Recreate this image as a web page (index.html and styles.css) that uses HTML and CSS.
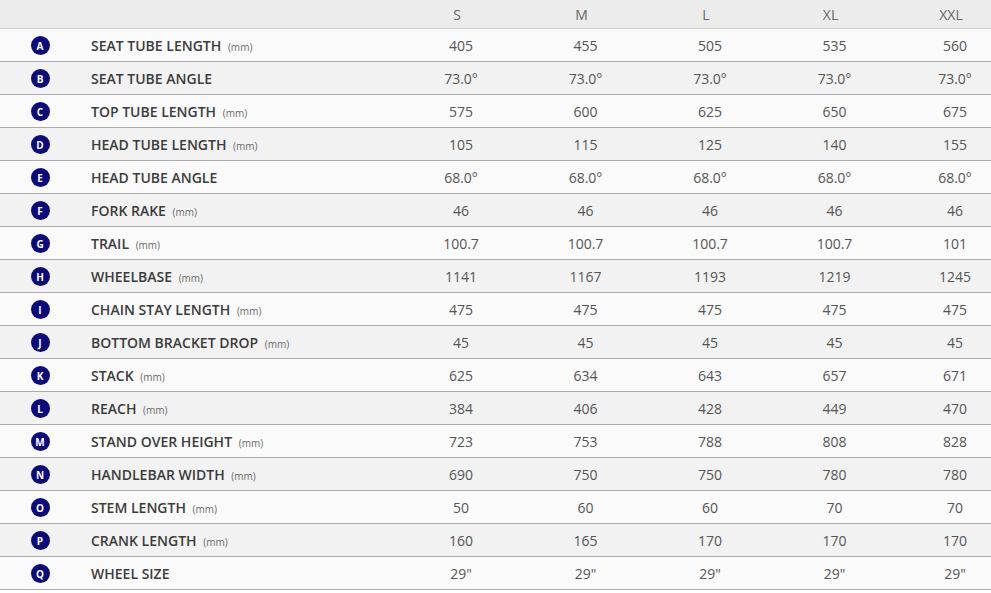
FILE: index.html
```html
<!DOCTYPE html>
<html lang="en">
<head>
<meta charset="utf-8">
<title>Geometry</title>
<link rel="stylesheet" href="styles.css">
</head>
<body>
<div class="geo">
  <div class="row head">
    <div class="key"></div><div class="label"></div>
    <div class="val">S</div><div class="val">M</div><div class="val">L</div><div class="val">XL</div><div class="val last">XXL</div>
  </div>
  <div class="row odd"><div class="key"><span class="dot">A</span></div><div class="label">SEAT TUBE LENGTH <small>(mm)</small></div><div class="val">405</div><div class="val">455</div><div class="val">505</div><div class="val">535</div><div class="val last">560</div></div>
  <div class="row even"><div class="key"><span class="dot">B</span></div><div class="label">SEAT TUBE ANGLE</div><div class="val">73.0°</div><div class="val">73.0°</div><div class="val">73.0°</div><div class="val">73.0°</div><div class="val last">73.0°</div></div>
  <div class="row odd"><div class="key"><span class="dot">C</span></div><div class="label">TOP TUBE LENGTH <small>(mm)</small></div><div class="val">575</div><div class="val">600</div><div class="val">625</div><div class="val">650</div><div class="val last">675</div></div>
  <div class="row even"><div class="key"><span class="dot">D</span></div><div class="label">HEAD TUBE LENGTH <small>(mm)</small></div><div class="val">105</div><div class="val">115</div><div class="val">125</div><div class="val">140</div><div class="val last">155</div></div>
  <div class="row odd"><div class="key"><span class="dot">E</span></div><div class="label">HEAD TUBE ANGLE</div><div class="val">68.0°</div><div class="val">68.0°</div><div class="val">68.0°</div><div class="val">68.0°</div><div class="val last">68.0°</div></div>
  <div class="row even"><div class="key"><span class="dot">F</span></div><div class="label">FORK RAKE <small>(mm)</small></div><div class="val">46</div><div class="val">46</div><div class="val">46</div><div class="val">46</div><div class="val last">46</div></div>
  <div class="row odd"><div class="key"><span class="dot">G</span></div><div class="label">TRAIL <small>(mm)</small></div><div class="val">100.7</div><div class="val">100.7</div><div class="val">100.7</div><div class="val">100.7</div><div class="val last">101</div></div>
  <div class="row even"><div class="key"><span class="dot">H</span></div><div class="label">WHEELBASE <small>(mm)</small></div><div class="val">1141</div><div class="val">1167</div><div class="val">1193</div><div class="val">1219</div><div class="val last">1245</div></div>
  <div class="row odd"><div class="key"><span class="dot">I</span></div><div class="label">CHAIN STAY LENGTH <small>(mm)</small></div><div class="val">475</div><div class="val">475</div><div class="val">475</div><div class="val">475</div><div class="val last">475</div></div>
  <div class="row even"><div class="key"><span class="dot">J</span></div><div class="label">BOTTOM BRACKET DROP <small>(mm)</small></div><div class="val">45</div><div class="val">45</div><div class="val">45</div><div class="val">45</div><div class="val last">45</div></div>
  <div class="row odd"><div class="key"><span class="dot">K</span></div><div class="label">STACK <small>(mm)</small></div><div class="val">625</div><div class="val">634</div><div class="val">643</div><div class="val">657</div><div class="val last">671</div></div>
  <div class="row even"><div class="key"><span class="dot">L</span></div><div class="label">REACH <small>(mm)</small></div><div class="val">384</div><div class="val">406</div><div class="val">428</div><div class="val">449</div><div class="val last">470</div></div>
  <div class="row odd"><div class="key"><span class="dot">M</span></div><div class="label">STAND OVER HEIGHT <small>(mm)</small></div><div class="val">723</div><div class="val">753</div><div class="val">788</div><div class="val">808</div><div class="val last">828</div></div>
  <div class="row even"><div class="key"><span class="dot">N</span></div><div class="label">HANDLEBAR WIDTH <small>(mm)</small></div><div class="val">690</div><div class="val">750</div><div class="val">750</div><div class="val">780</div><div class="val last">780</div></div>
  <div class="row odd"><div class="key"><span class="dot">O</span></div><div class="label">STEM LENGTH <small>(mm)</small></div><div class="val">50</div><div class="val">60</div><div class="val">60</div><div class="val">70</div><div class="val last">70</div></div>
  <div class="row even"><div class="key"><span class="dot">P</span></div><div class="label">CRANK LENGTH <small>(mm)</small></div><div class="val">160</div><div class="val">165</div><div class="val">170</div><div class="val">170</div><div class="val last">170</div></div>
  <div class="row odd"><div class="key"><span class="dot">Q</span></div><div class="label">WHEEL SIZE</div><div class="val">29"</div><div class="val">29"</div><div class="val">29"</div><div class="val">29"</div><div class="val last">29"</div></div>
</div>
</body>
</html>
```
FILE: styles.css
```css
html, body {
  margin: 0;
  padding: 0;
  background: #ffffff;
}
body {
  font-family: "Open Sans", "Liberation Sans", sans-serif;
  width: 991px;
  overflow: hidden;
}
.geo {
  display: flex;
  flex-direction: column;
}
.row {
  display: grid;
  grid-template-columns: 80px 319px 124px 125px 124px 125px 94px;
  align-items: center;
  height: 33px;
  box-sizing: border-box;
  border-bottom: 1px solid #ababab;
  padding-top: 1px;
}
.row.head {
  height: 29px;
  background: #ececec;
  border-bottom-color: #cfcfcf;
  padding-top: 0;
}
.row.odd { background: #fafafa; }
.row.even { background: #f2f2f2; }
.key {
  display: flex;
  justify-content: center;
}
.dot {
  width: 19px;
  height: 19px;
  border-radius: 50%;
  background: #0a0a7c;
  color: #ffffff;
  font-size: 10px;
  font-weight: 700;
  display: flex;
  align-items: center;
  justify-content: center;
  line-height: 1;
}
.label {
  padding-left: 11px;
  font-size: 14px;
  font-weight: 600;
  color: #3c3c3c;
  white-space: nowrap;
}
.label small {
  margin-left: 3px;
  font-size: 10px;
  font-weight: 400;
  color: #6a6a6a;
}
.val {
  text-align: center;
  font-size: 14px;
  color: #555555;
}
.val.last {
  padding-left: 22px;
}
.head .val {
  color: #666666;
  padding-right: 8px;
}
.head .val.last {
  padding-left: 22px;
  padding-right: 8px;
}
```
